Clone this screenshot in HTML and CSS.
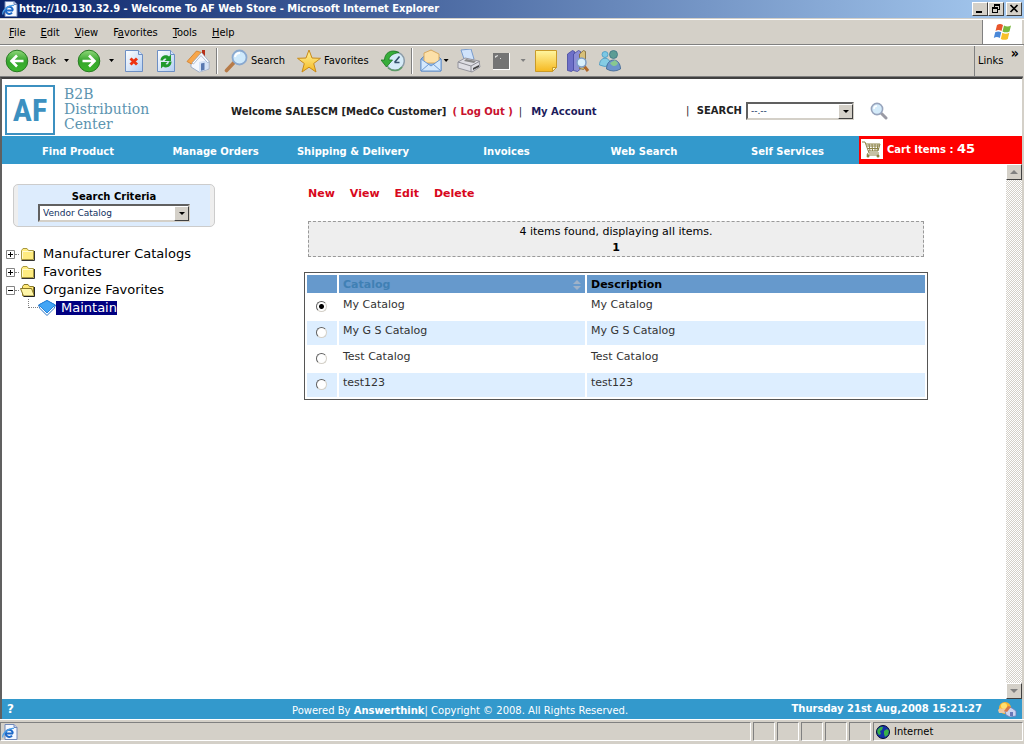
FILE: index.html
```html
<!DOCTYPE html>
<html lang="en">
<head>
<meta charset="utf-8">
<title>Welcome To AF Web Store</title>
<link rel="stylesheet" href="styles.css">
</head>
<body>
<svg class="defs" aria-hidden="true">
  <defs>
    <linearGradient id="green" x1="0" y1="0" x2="0" y2="1"><stop offset="0" stop-color="#8fd87a"/><stop offset=".5" stop-color="#35a52c"/><stop offset="1" stop-color="#3cb82c"/></linearGradient>
    <linearGradient id="paper" x1="0" y1="0" x2="1" y2="1"><stop offset="0" stop-color="#fff"/><stop offset="1" stop-color="#b4cff2"/></linearGradient>
    <linearGradient id="gold" x1="0" y1="0" x2="0" y2="1"><stop offset="0" stop-color="#fff6a0"/><stop offset="1" stop-color="#f5b820"/></linearGradient>
    <symbol id="iepage" viewBox="0 0 16 16">
      <path d="M3 .5h9l3 3v12H3z" fill="#f4f8ff" stroke="#7088b8"/><path d="M12 .5v3h3" fill="#c0d0f0" stroke="#7088b8"/>
      <path d="M11 9.500H4.500M10.800 9.500A3.600 3.600 0 1 0 10 11.600" fill="none" stroke="#1c68c8" stroke-width="2"/>
      <path d="M1 13.500C-.5 10 7 3.500 12 4.500" fill="none" stroke="#4aa0e8" stroke-width="1.200"/>
    </symbol>
    <symbol id="folder" viewBox="0 0 16 14">
      <path d="M1.500 12.500v-9l1.500-2h4l1.500 2h5v9z" fill="#ffec80" stroke="#a89840"/><path d="M2.500 11.500v-7h10" fill="none" stroke="#fffbd0"/><path d="M14.500 4v9.500h-13" fill="none" stroke="#333"/>
    </symbol>
  </defs>
</svg>

<div class="titlebar">
  <svg class="i16"><use href="#iepage"/></svg>
  <span class="titlebar-text">http://10.130.32.9 - Welcome To AF Web Store - Microsoft Internet Explorer</span>
  <div class="winbtns">
    <button class="winbtn" aria-label="Minimize"><svg viewBox="0 0 14 12"><path d="M3 8h6v2H3z"/></svg></button>
    <button class="winbtn" aria-label="Restore"><svg viewBox="0 0 14 12"><path d="M5 1h6v6H9V6h1V3H6v1H5zM3 4h6v6H3zM4 6v3h4V6z" fill-rule="evenodd"/></svg></button>
    <button class="winbtn close" aria-label="Close"><svg viewBox="0 0 14 12"><path d="M3.500 2l7 7M10.500 2l-7 7" stroke="#000" stroke-width="1.700"/></svg></button>
  </div>
</div>

<nav class="menubar" aria-label="Browser menu">
  <div class="menus">
    <button><u>F</u>ile</button><button><u>E</u>dit</button><button><u>V</u>iew</button><button>F<u>a</u>vorites</button><button><u>T</u>ools</button><button><u>H</u>elp</button>
  </div>
  <div class="flag">
    <svg viewBox="0 0 20 18"><path d="M4 2q3-2 6 0l-1.500 6q-3-1.800-6 0z" fill="#e8562c"/><path d="M11 2.500q3.500 1.800 7 0L16.500 8.500q-3.500 1.700-7 0z" fill="#79b83c"/><path d="M2.200 9.300q3-1.800 6 0L6.800 15q-3-1.800-6 0z" fill="#4a88d8"/><path d="M9.300 9.800q3.500 1.800 7 0L14.800 16q-3.500 1.700-7 0z" fill="#f8c028"/></svg>
  </div>
</nav>

<div class="toolbar">
  <button class="tool"><svg viewBox="0 0 24 24"><circle cx="12" cy="12" r="10.800" fill="url(#green)" stroke="#2a7c24"/><path d="M18.500 12H7M12 6.500L6.500 12l5.500 5.500" fill="none" stroke="#fff" stroke-width="2.600"/></svg><span>Back</span></button>
  <button class="caret" aria-label="Back history"></button>
  <button class="tool" aria-label="Forward"><svg viewBox="0 0 24 24"><circle cx="12" cy="12" r="10.800" fill="url(#green)" stroke="#2a7c24"/><path d="M5.500 12H17M12 6.500l5.500 5.500-5.500 5.500" fill="none" stroke="#fff" stroke-width="2.600"/></svg></button>
  <button class="caret" aria-label="Forward history"></button>
  <button class="tool" aria-label="Stop"><svg viewBox="0 0 24 24"><path d="M3.500 1.500h13l4 4v17h-17z" fill="url(#paper)" stroke="#6d8fc4"/><path d="M16.500 1.500v4h4" fill="#d5e4fa" stroke="#6d8fc4"/><path d="M8.500 9.500l6.500 6M15 9.500l-6.500 6" stroke="#ee3311" stroke-width="3"/></svg></button>
  <button class="tool" aria-label="Refresh"><svg viewBox="0 0 24 24"><path d="M3.500 1.500h13l4 4v17h-17z" fill="url(#paper)" stroke="#6d8fc4"/><path d="M16.500 1.500v4h4" fill="#d5e4fa" stroke="#6d8fc4"/><path d="M6.500 11.500c0-5 6-6.500 8.500-4l2-2v6.500h-6.500l2-2c-2-1-3 0-3.500 1.500zM17.500 12.500c0 6-6 7-8.500 5l-2 2V13h6.500l-2 2c2 1 3 0 3.500-2.500z" fill="#1f9a2c"/></svg></button>
  <button class="tool" aria-label="Home"><svg viewBox="0 0 24 24"><path d="M16 1h3v7h-3z" fill="#b83018"/><path d="M5 12l9-8 9 9v7l-10 3-8-5z" fill="#f4f7fd" stroke="#8c9fc0" stroke-width=".8"/><path d="M13 13l9-2v9l-9 3z" fill="#d4e2f6"/><path d="M1 12.500L10.500 2 15.500 3.500 7 13.500 5.500 15z" fill="#f7a64a" stroke="#d07c28" stroke-width=".8"/><path d="M15.500 3.500L23.500 13l-2 .5L15 6.500 7.500 15 6 14z" fill="#fff" stroke="#8ba0c0" stroke-width=".7"/><path d="M15 14.500l3.500-.7v7l-3.500 1z" fill="#5878b0"/></svg></button>
  <span class="sep"></span>
  <button class="tool"><svg viewBox="0 0 24 24"><path d="M2.500 21.500L10 13.500" stroke="#b77b48" stroke-width="3.600" stroke-linecap="round"/><circle cx="15.500" cy="8.500" r="7" fill="#cfeafc" stroke="#8aa9cf" stroke-width="1.800"/><path d="M11 8a5 5 0 0 1 5-4" fill="none" stroke="#fff" stroke-width="2"/></svg><span>Search</span></button>
  <button class="tool star"><svg viewBox="0 0 24 24"><path d="M12 1l3 8 8.500.3-6.800 5.200L19 23l-7-4.800L5 23l2.300-8.500L.5 9.300 9 9z" fill="url(#gold)" stroke="#c98a18"/></svg><span>Favorites</span></button>
  <button class="tool history" aria-label="History"><svg viewBox="0 0 24 24"><circle cx="14" cy="12" r="9.300" fill="#d6ebf8" stroke="#8c9ca8" stroke-width="1.500"/><path d="M13.500 13.500l5-6M13.500 13.500h5" fill="none" stroke="#34506c" stroke-width="1.600"/><path d="M18 3.500C10-.5 3.500 4 3.500 11H0l5.500 7 6-7H8c0-4 4-6.500 10-7.500z" fill="#37ad3a" stroke="#1c7422" stroke-width=".8"/><path d="M7 19c5 4 11 3 14-1" fill="none" stroke="#5c9c68" stroke-width="1.500"/></svg></button>
  <span class="sep"></span>
  <button class="tool" aria-label="Mail"><svg viewBox="0 0 24 24"><path d="M2 10L12 1l10 9v12H2z" fill="#88b4e8" stroke="#5a86c0"/><path d="M5 4l7-3 8 4v9H5z" fill="#fde0a8" stroke="#d9aa60"/><path d="M2 10l10 7 10-7v12H2z" fill="#d4e8fc" stroke="#6d98cf"/><path d="M2 22l8-7M22 22l-8-7" stroke="#6d98cf"/></svg></button>
  <button class="caret snug" aria-label="Mail options"></button>
  <button class="tool" aria-label="Print"><svg viewBox="0 0 24 24"><path d="M4 1l10-1 3 10-9 3z" fill="#d0e3fb" stroke="#7a9ccc"/><path d="M1 13l7-4 14 3 1 6-8 5-14-4z" fill="#dedee4" stroke="#95959e"/><path d="M1 13l13 4 9-5M14 17v6" fill="none" stroke="#8c8c94"/><path d="M7 12l10 2 2-2-10-2z" fill="#888"/><path d="M16 19l6-3v2l-6 3z" fill="#444"/></svg></button>
  <button class="tool" aria-label="Edit"><svg viewBox="0 0 24 24"><path d="M4 4h17v17H4z" fill="#fff"/><path d="M4 4h16v16H4z" fill="#747474"/><path d="M6 7l3-1v1l-3 2zM11 9h1v1h-1z" fill="#ddd"/></svg></button>
  <button class="caret off" aria-label="Edit options"></button>
  <button class="tool" aria-label="Discuss"><svg viewBox="0 0 24 24"><path d="M1.500 1.500h21v17l-4 4h-17z" fill="url(#gold)" stroke="#c99a28"/><path d="M22.500 18.500h-4v4z" fill="#fff3a8" stroke="#c99a28"/></svg></button>
  <button class="tool" aria-label="Research"><svg viewBox="0 0 24 24"><path d="M1.500 5l5-3.500 2 1V20l-3 2.500-4-1z" fill="#6e70c8" stroke="#4448a0" stroke-width=".8"/><path d="M7.500 5l5-3.500 2 1V20l-3 2.500-4-1z" fill="#8c8ed4" stroke="#4448a0" stroke-width=".8"/><path d="M13.500 5l4-3.500 2 1V18l-2 2.500-4-1z" fill="#d8c078" stroke="#7c6430" stroke-width=".8"/><path d="M18 17l4 5" stroke="#b0682c" stroke-width="3"/><circle cx="15.500" cy="13.500" r="4.500" fill="#d8effc" stroke="#7c9cc8" stroke-width="1.500"/></svg></button>
  <button class="tool" aria-label="Messenger"><svg viewBox="0 0 24 24"><circle cx="7" cy="5.500" r="3" fill="#7cc8e4" stroke="#4898c0" stroke-width=".8"/><path d="M1.500 16c0-9 11-9 11 0q-5.500 3-11 0z" fill="#84cce4" stroke="#4898c0" stroke-width=".8"/><circle cx="15.500" cy="5.500" r="4" fill="#5c9c94" stroke="#3c7484" stroke-width=".8"/><path d="M8.500 20c0-12 14-12 14 0q-7 4-14 0z" fill="#6c94cc" stroke="#3c6490" stroke-width=".8"/><path d="M12 14c3 5 7 3 8 0l-3-3z" fill="#88c890"/></svg></button>
  <div class="links"><span>Links</span><button class="chevron" aria-label="More links">»</button></div>
</div>

<div class="viewport">
  <header class="banner">
    <div class="logo">
      <strong class="logo-af">AF</strong>
      <span class="logo-name">B2B<br>Distribution<br>Center</span>
    </div>
    <div class="account">
      <span>Welcome SALESCM [MedCo Customer]</span>
      <a class="logout" href="#logout">( Log Out )</a>
      <span class="bar">|</span>
      <a class="my" href="#account">My Account</a>
    </div>
    <form class="search">
      <label for="q"><span class="bar">|</span> SEARCH</label>
      <span class="drop"><select id="q"><option>--.--</option></select><span class="drop-btn"></span></span>
      <button type="button" class="go" aria-label="Search"><svg viewBox="0 0 18 18"><path d="M11.500 11.500L16 16" stroke="#9a9aa4" stroke-width="3" stroke-linecap="round"/><circle cx="7" cy="7" r="5.600" fill="#d4ebfa" stroke="#98a4bc" stroke-width="1.600"/><path d="M4 7a3 3 0 0 1 3-3" fill="none" stroke="#fff" stroke-width="1.500"/></svg></button>
    </form>
  </header>

  <nav class="mainnav" aria-label="Store">
    <a href="#find">Find Product</a><a href="#orders">Manage Orders</a><a href="#ship">Shipping &amp; Delivery</a><a href="#inv">Invoices</a><a href="#web">Web Search</a><a class="self" href="#self">Self Services</a>
    <a class="cart" href="#cart">
      <svg viewBox="0 0 22 20"><path d="M0 0h22v20H0z" fill="#fff"/><path d="M1 3h3l4 11h10M5 5h14l-2 7H7M6 7h12.500M6.500 9.500H18M8 5l1 7M11 5l.5 7M14 5v7M17 5l-1 7M7 14l-1 2h12" fill="none" stroke="#8c8348"/><circle cx="7" cy="17" r="1.500" fill="#8c8348"/><circle cx="17" cy="17" r="1.500" fill="#8c8348"/></svg>
      <span>Cart Items : <b>45</b></span>
    </a>
  </nav>

  <div class="page">
    <aside class="sidebar">
      <div class="criteria">
        <div class="criteria-in">
          <label for="crit">Search Criteria</label>
          <span class="drop"><select id="crit"><option>Vendor Catalog</option></select><span class="drop-btn"></span></span>
        </div>
      </div>
      <ul class="tree">
        <li><button class="box" aria-label="Expand"><svg viewBox="0 0 9 9"><path d="M.5.5h8v8h-8z" fill="#fff" stroke="#848484"/><path d="M2 4.500h5M4.500 2v5" stroke="#000"/></svg></button><i class="dots"></i><svg class="node"><use href="#folder"/></svg><a href="#m">Manufacturer Catalogs</a></li>
        <li><button class="box" aria-label="Expand"><svg viewBox="0 0 9 9"><path d="M.5.5h8v8h-8z" fill="#fff" stroke="#848484"/><path d="M2 4.500h5M4.500 2v5" stroke="#000"/></svg></button><i class="dots"></i><svg class="node"><use href="#folder"/></svg><a href="#f">Favorites</a></li>
        <li><button class="box" aria-label="Collapse"><svg viewBox="0 0 9 9"><path d="M.5.5h8v8h-8z" fill="#fff" stroke="#848484"/><path d="M2 4.500h5" stroke="#000"/></svg></button><i class="dots"></i><svg class="node" viewBox="0 0 16 14"><path d="M2.500 12.500v-9l1.500-2h4l1.500 2h4v9z" fill="#ffe878" stroke="#8a7a28"/><path d="M.5 5.500h11l3 7.500h-11z" fill="#fff6a8" stroke="#8a7a28"/><path d="M14.500 4v9.500h-11" fill="none" stroke="#222"/></svg><a href="#o">Organize Favorites</a></li>
        <li class="child"><i class="elbow"></i><svg class="leaf" viewBox="0 0 18 16"><path d="M9 .5L17.500 5 16 8.500 9 15.500 2 8.500.5 5z" fill="#fff" stroke="#2870c0"/><path d="M9 .5l8 4.500-8 8L1 5z" fill="#42a5f5" stroke="#2484dc"/></svg><a class="selected" href="#maintain">Maintain</a></li>
      </ul>
    </aside>

    <main class="content">
      <div class="actions"><a href="#new">New</a><a href="#view">View</a><a href="#edit">Edit</a><a href="#delete">Delete</a></div>
      <div class="notice">4 items found, displaying all items.<br><b>1</b></div>
      <table class="grid">
        <colgroup><col class="c1"><col class="c2"><col></colgroup>
        <thead><tr><th></th><th class="sorted"><a href="#sort">Catalog <svg viewBox="0 0 8 10"><path d="M4 0l4 4H0zM0 6h8l-4 4z" fill="#9fb2c8"/></svg></a></th><th>Description</th></tr></thead>
        <tbody>
          <tr><td><input type="radio" name="cat" id="r1" checked></td><td><label for="r1">My Catalog</label></td><td>My Catalog</td></tr>
          <tr><td><input type="radio" name="cat" id="r2"></td><td><label for="r2">My G S Catalog</label></td><td>My G S Catalog</td></tr>
          <tr><td><input type="radio" name="cat" id="r3"></td><td><label for="r3">Test Catalog</label></td><td>Test Catalog</td></tr>
          <tr><td><input type="radio" name="cat" id="r4"></td><td><label for="r4">test123</label></td><td>test123</td></tr>
        </tbody>
      </table>
    </main>

    <div class="scroll"><button class="up" aria-label="Scroll up"></button><button class="down" aria-label="Scroll down"></button></div>
  </div>

  <footer class="foot">
    <a class="help" href="#help">?</a>
    <span class="copy">Powered By <b>Answerthink</b>| Copyright © 2008. All Rights Reserved.</span>
    <span class="date">Thursday 21st Aug,2008 15:21:27</span>
    <svg class="weather" viewBox="0 0 20 16"><circle cx="8" cy="7" r="6" fill="#fdb52c"/><circle cx="7" cy="5" r="3" fill="#ffe070"/><path d="M1 9q2-3 4-1 3-2 5 1v3H2z" fill="#f0c8a0"/><path d="M8 10l4-4 3 1 4 3v5l-6 1-4-2z" fill="#ccd4f0" stroke="#6c7cb8" stroke-width=".8"/><path d="M7 10l4-5 3 1-4 5z" fill="#d87848"/><path d="M13 11h3v4h-3z" fill="#6878b8"/></svg>
  </footer>
</div>

<div class="status">
  <div class="pane grow"><svg class="i16"><use href="#iepage"/></svg></div>
  <div class="pane"></div><div class="pane"></div><div class="pane"></div><div class="pane"></div><div class="pane"></div>
  <div class="pane zone"><svg viewBox="0 0 14 14"><circle cx="7" cy="7" r="6.500" fill="#1430a8" stroke="#000a30"/><path d="M2 4q3-3 5-2L6 5 4 6l1 3-2 1Q0 7 2 4zM8 6l3-2 2 2-1 4-3 2-1-3z" fill="#38b048"/></svg><span>Internet</span></div>
</div>
</body>
</html>
```
FILE: styles.css
```css
* { box-sizing: border-box; }
body {
  margin: 0;
  min-height: 100vh;
  display: flex;
  flex-direction: column;
  background: #d4d0c8;
  color: #000;
  font: 11px/14px "DejaVu Sans", Verdana, sans-serif;
}
button { font: inherit; color: inherit; background: none; border: 0; padding: 0; }
a { color: inherit; text-decoration: none; }
svg { display: block; flex: none; }
.defs { position: absolute; width: 0; height: 0; }
.i16 { width: 16px; height: 16px; }

.titlebar, .menubar, .toolbar, .status { font-family: "DejaVu Sans Condensed", Tahoma, sans-serif; }
.titlebar {
  display: flex;
  align-items: center;
  height: 18px;
  padding: 0 2px;
  background: linear-gradient(90deg, #0a246a, #a6caf0);
  color: #fff;
  font-weight: bold;
}
.titlebar-text { flex: 1; padding-left: 1px; white-space: nowrap; }
.winbtns { display: flex; }
.winbtn {
  width: 16px;
  height: 14px;
  background: #d4d0c8;
  border: 1px solid;
  border-color: #fff #404040 #404040 #fff;
}
.winbtn svg { width: 14px; height: 12px; }
.close { margin-left: 2px; }

.menubar {
  display: flex;
  justify-content: space-between;
  height: 26px;
  margin-top: 1px;
  border-top: 1px solid #fff;
  border-bottom: 1px solid #808080;
}
.menus { display: flex; gap: 15px; padding: 1px 0 0 9px; }
.flag {
  display: grid;
  place-items: center;
  width: 40px;
  margin-right: 2px;
  background: #fff;
  border-left: 1px solid #808080;
}
.flag svg { width: 20px; height: 18px; }

.toolbar {
  display: flex;
  align-items: center;
  gap: 8px;
  height: 32px;
  padding-left: 5px;
  margin-right: 1px;
  border-top: 1px solid #fff;
  border-bottom: 1px solid #808080;
}
.tool { display: flex; align-items: center; gap: 3px; }
.tool svg { width: 24px; height: 24px; }
.caret {
  width: 7px;
  height: 4px;
  margin: 0 -1px;
  background: #000;
  clip-path: polygon(1px 0, 6px 0, 50% 3px);
}
.caret.snug { margin-left: -8px; }
.caret.off { background: #808080; }
.sep {
  align-self: stretch;
  width: 2px;
  margin: 2px -2px;
  border-left: 1px solid #808080;
  border-right: 1px solid #fff;
}
.star, .history { margin-left: 4px; }
.links {
  display: flex;
  align-self: stretch;
  align-items: center;
  justify-content: space-between;
  width: 49px;
  margin-left: auto;
  padding: 0 4px 0 3px;
  border-left: 1px solid #808080;
}
.chevron { align-self: flex-start; font-size: 14px; font-weight: bold; }

.viewport {
  flex: 1;
  display: flex;
  flex-direction: column;
  margin-right: 1px;
  border: 2px solid #404040;
  border-left-color: #606060;
  border-right: 1px solid #d4d0c8;
  border-bottom: 0;
  background: #fff;
}
.banner {
  display: flex;
  align-items: center;
  height: 57px;
  padding: 4px 134px 0 3px;
  font-weight: bold;
}
.logo { display: flex; align-items: center; gap: 9px; width: 226px; color: #3c90c0; }
.logo-af {
  width: 50px;
  height: 50px;
  border: 2px solid #3c90c0;
  text-align: center;
  font: bold 32px/46px "Roboto Condensed", "Liberation Sans Narrow", "Roboto", sans-serif;
}
.logo-name { font: 14px/15px "DejaVu Serif", Georgia, serif; color: #5c94b0; }
.account { display: flex; gap: 6px; padding-top: 4px; color: #222; font-size: 10px; white-space: nowrap; }
.logout { color: #c8102e; }
.my { color: #1c1c5c; padding-left: 3px; }
.search { display: flex; align-items: center; gap: 4px; margin-left: auto; padding-top: 2px; font-size: 10px; color: #222; }
.bar { font-weight: normal; }
.search .bar { margin-right: 4px; }
.drop { position: relative; display: block; width: 108px; height: 18px; }
.drop select {
  appearance: none;
  display: block;
  width: 100%;
  height: 100%;
  padding: 0 18px 0 3px;
  background: #fff;
  border: 2px solid;
  border-color: #606060 #d4d0c8 #d4d0c8 #606060;
  border-radius: 0;
  color: #103060;
  font: 9px/12px "DejaVu Sans", Verdana, sans-serif;
}
.drop-btn {
  position: absolute;
  top: 2px;
  right: 1px;
  bottom: 1px;
  width: 15px;
  background: #d4d0c8;
  border: 1px solid;
  border-color: #fff #404040 #404040 #fff;
  pointer-events: none;
}
.drop-btn::after {
  content: "";
  position: absolute;
  top: 5px;
  left: 4px;
  border: 3px solid transparent;
  border-top-color: #000;
  border-bottom: 0;
}
.go { margin-left: 12px; }
.go svg { width: 18px; height: 18px; }

.mainnav {
  display: grid;
  grid-template-columns: 152fr 123fr 152fr 155fr 120fr 155fr 163fr;
  height: 28px;
  background: #3399cc;
  color: #fff;
  font-size: 10px;
  font-weight: bold;
  text-align: center;
}
.mainnav a { padding-top: 9px; white-space: nowrap; }
.mainnav .self { padding-left: 12px; }
.mainnav .cart { display: flex; align-items: center; gap: 4px; padding: 0 2px 2px; background: #f00; }
.cart svg { width: 22px; height: 20px; }
.cart b { font-size: 13px; }

.page { flex: 1; display: flex; }
.sidebar { width: 236px; padding: 20px 0 0 4px; }
.criteria {
  width: 202px;
  margin-left: 7px;
  padding: 0 4px;
  background: #eee;
  border: 1px solid #ccc;
  border-radius: 5px;
}
.criteria-in {
  display: flex;
  flex-direction: column;
  align-items: center;
  padding: 5px 0 4px;
  background: #ddecfd;
  font-weight: bold;
  font-size: 10px;
}
.criteria .drop { width: 152px; }
.tree { list-style: none; margin: 18px 0 0; padding: 0; font-size: 13px; line-height: 18px; }
.tree li { display: flex; align-items: center; height: 18px; white-space: nowrap; }
.box svg { width: 9px; height: 9px; }
.dots { width: 4px; border-top: 1px dotted #808080; }
.node { width: 16px; height: 14px; margin: 0 7px 0 1px; }
.tree .child { padding-left: 22px; }
.elbow { align-self: flex-start; width: 10px; height: 9px; border: dotted #808080; border-width: 0 0 1px 1px; }
.leaf { width: 18px; height: 16px; }
.selected { background: #000080; color: #fff; line-height: 14px; padding-left: 5px; }

.content { flex: 1; padding: 23px 78px 0 66px; }
.actions { display: flex; gap: 15px; padding-left: 4px; color: #d8081c; font-weight: bold; }
.notice {
  margin: 20px 4px 15px;
  padding: 2px 0 0;
  background: #eee;
  border: 1px dashed #999;
  text-align: center;
  line-height: 16px;
}
.grid {
  width: 100%;
  table-layout: fixed;
  border: 1px solid #555;
  border-spacing: 2px;
}
.c1 { width: 30px; }
.c2 { width: 246px; }
.grid th { height: 18px; padding: 1px 4px 0; background: #6699cc; text-align: left; }
.grid td { height: 24px; padding: 3px 4px 0; vertical-align: top; color: #333; }
.sorted a { display: flex; justify-content: space-between; align-items: center; color: #4080b4; }
.sorted svg { width: 8px; height: 10px; }
.grid tbody tr:nth-child(even) td { background: #ddeeff; }
.grid input {
  appearance: none;
  display: block;
  width: 11px;
  height: 11px;
  margin: 3px 0 0 5px;
  border: 1px solid;
  border-color: #606060 #d4d0c8 #d4d0c8 #606060;
  border-radius: 50%;
  background: #fff;
}
.grid input:checked { background: radial-gradient(circle, #000 2px, #fff 3px); }

.scroll {
  display: flex;
  flex-direction: column;
  justify-content: space-between;
  width: 16px;
  background: repeating-conic-gradient(#d4d0c8 0 25%, #fff 0 50%) 0 0 / 2px 2px;
}
.up, .down {
  display: grid;
  place-items: center;
  height: 16px;
  background: #d4d0c8;
  border: 1px solid;
  border-color: #fff #404040 #404040 #fff;
}
.up::after, .down::after { content: ""; width: 8px; height: 4px; background: #808080; clip-path: polygon(50% 0, 100% 100%, 0 100%); }
.down::after { clip-path: polygon(0 0, 100% 0, 50% 100%); }

.foot {
  display: flex;
  align-items: center;
  height: 20px;
  padding: 0 5px;
  background: #3399cc;
  color: #fff;
  font-size: 10px;
  white-space: nowrap;
}
.help { width: 285px; font-size: 12px; font-weight: bold; }
.copy { padding-top: 3px; }
.date { margin-left: auto; font-weight: bold; }
.weather { width: 20px; height: 16px; margin-left: 15px; }

.status { display: flex; gap: 2px; height: 25px; padding: 2px 1px 3px 0; border-top: 1px solid #fff; }
.pane {
  display: flex;
  align-items: center;
  width: 22px;
  border: 1px solid;
  border-color: #808080 #fff #fff #808080;
}
.grow { flex: 1; padding-left: 1px; }
.zone { width: 150px; gap: 4px; padding-left: 2px; }
.zone svg { width: 14px; height: 14px; }
```
